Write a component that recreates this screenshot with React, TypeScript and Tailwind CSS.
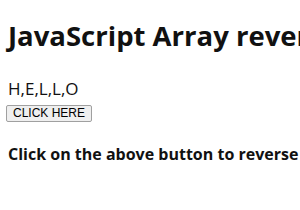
export default function App() {
  return (
    <div
      className="w-[300px] h-[210px] overflow-hidden bg-white px-2 text-black whitespace-nowrap"
      style={{ fontFamily: '"Open Sans", "Noto Sans", sans-serif' }}
    >
      <h1 className="pt-[18px] text-[27.5px] font-bold leading-[36px] text-[#111]">
        JavaScript Array reverse() Method
      </h1>
      <div className="mt-[25px] text-[17px] leading-[20px] text-[#111]">H,E,L,L,O</div>
      <button
        className="-ml-[2px] h-[17px] border border-[#a0a0a0] bg-[#efefef] px-[6px] text-[12px] leading-[15px] text-black rounded-[2px]"
        style={{ fontFamily: '"Liberation Sans", Arial, sans-serif' }}
      >
        CLICK HERE
      </button>
      <p className="mt-[21px] text-[16px] font-bold leading-[20px] text-[#111]">
        Click on the above button to reverse the array.
      </p>
    </div>
  );
}
